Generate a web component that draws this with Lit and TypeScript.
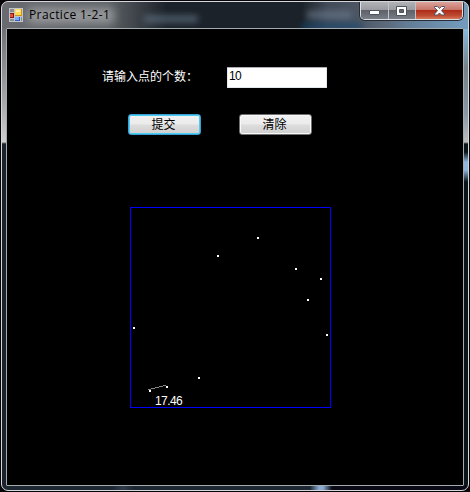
import { LitElement, html, svg, css } from "lit";
import { customElement } from "lit/decorators.js";

const POINTS: [number, number][] = [
  [257, 237], [217, 255], [295, 268], [320, 278], [307, 299],
  [133, 327], [326, 334], [198, 377], [149, 390], [166, 386],
];

@customElement("plot-canvas")
class PlotCanvas extends LitElement {
  static styles = css`
    :host { display: block; width: 201px; height: 201px; position: relative; }
    svg { display: block; }
    .distance {
      position: absolute; left: 25px; top: 187px; line-height: 14px;
      font-size: 12px; color: #fff; letter-spacing: -0.6px;
      font-family: "Liberation Sans", sans-serif;
    }
  `;
  render() {
    return html`
      <svg width="201" height="201" viewBox="130 207 201 201" shape-rendering="crispEdges">
        <path fill="#0000ff" fill-rule="evenodd" d="M130 207h201v201h-201zM131 208v199h199v-199z" />
        <path d="M148 389.5h3M151 388.5h4M155 387.5h4M159 386.5h4M163 385.5h3" stroke="#858585" fill="none" />
        ${POINTS.map(([x, y]) => svg`<rect x=${x} y=${y} width="2" height="2" fill="#fff" />`)}
      </svg>
      <span class="distance">17.46</span>
    `;
  }
}

@customElement("title-bar")
class TitleBar extends LitElement {
  static styles = css`
    :host { display: flex; height: 26px; position: relative; overflow: hidden; }
    .icon { margin: 6px 0 0 7px; flex: none; z-index: 1; }
    .title {
      margin: 5px 0 0 6px; font: 12px/16px "Open Sans", "Noto Sans", sans-serif;
      color: #000; white-space: nowrap; letter-spacing: 0.4px; flex: 1; z-index: 1;
    }
    .halo {
      position: absolute; left: 26px; top: 6px; width: 86px; height: 15px;
      background: #a2a4a6; filter: blur(5px); opacity: .85;
    }
    .blur {
      position: absolute; left: 142px; top: 13px; width: 54px; height: 8px;
      background: #64788a; filter: blur(3px); opacity: .6;
    }
    .blur.right { left: 305px; top: 9px; width: 44px; background: #76899d; opacity: .5; }
    .blur.glow { left: 300px; top: 21px; width: 60px; height: 7px; background: #174972; opacity: .7; }
    .controls {
      display: flex; width: 103px; height: 18px; flex: none; z-index: 1; margin-right: 5px;
      border: 1px solid #dce0e5; border-top: 0; border-radius: 0 0 5px 5px;
      box-shadow: 0 0 0 1px #272c35; overflow: hidden; box-sizing: border-box;
    }
    .control {
      display: flex; align-items: center; justify-content: center; width: 28px;
      background: linear-gradient(#b0b2b6, #9a9ca2 45%, #5e6168 50%, #777d86);
      border-right: 1px solid #c0c4ca; box-sizing: border-box;
    }
    .control svg { display: block; }
    .control.min svg { margin-top: 3px; }
    .control.max { width: 27px; }
    .control.close {
      flex: 1; border-right: 0;
      background: linear-gradient(#dba49b, #c9766a 45%, #ae2b18 50%, #bd4b32 80%, #d87859);
    }
  `;
  render() {
    return html`
      <div class="halo"></div>
      <div class="blur"></div><div class="blur right"></div><div class="blur glow"></div>
      <svg class="icon" width="14" height="14" viewBox="0 0 14 14" shape-rendering="crispEdges">
        <path fill="#c3c5ca" d="M0 0h14v14H0z" />
        <path fill="#888d94" d="M1 1h4v3H1zM1 11h4v2H1zM12 9h1v4h-1z" />
        <path fill="#8d1710" d="M1 5h4v5H1z" /><path fill="#df5146" d="M1 6h3v3H1z" />
        <path fill="#cb931b" d="M6 1h7v7H6z" /><path fill="#ffda54" d="M6 1h6v6H6z" />
        <path fill="#fff0a5" d="M7 2h4v2H7z" />
        <path fill="#295fc4" d="M6 9h5v4H6z" /><path fill="#77adf5" d="M6 9h4v3H6z" />
      </svg>
      <span class="title">Practice 1-2-1</span>
      <div class="controls">
        <div class="control min"><svg width="13" height="6" viewBox="0 0 13 6">
          <rect x="1.5" y="1.5" width="10" height="4" rx=".5" fill="#fff" stroke="#4d535f" /></svg></div>
        <div class="control max"><svg width="12" height="10" viewBox="0 0 12 10">
          <path fill="#fff" fill-rule="evenodd" stroke="#4d535f" d="M.5 .5h10v9h-10zM3.5 3.5v3h4v-3z" /></svg></div>
        <div class="control close"><svg width="13" height="12" viewBox="0 0 13 12">
          <path fill="#fff" stroke="#565466" stroke-linejoin="round" d="M1.5 1.5h3l2 2 2-2h3v1L8.5 5.7l3 3.3v1h-3l-2-2-2 2h-3V9l3-3.3-3-3.2z" /></svg></div>
      </div>
    `;
  }
}

@customElement("app-root")
class AppRoot extends LitElement {
  static styles = css`
    :host { display: block; width: 470px; height: 492px; background: #080509; overflow: hidden; padding: 1px; box-sizing: border-box; }
    .window {
      height: 490px; box-sizing: border-box; border: 1px solid #d4d8dc; border-radius: 7px;
      display: flex; flex-direction: column; overflow: hidden;
      background:
        linear-gradient(90deg, #0000, #6c9cc655 50px) 100% 18px / 110px 9px no-repeat,
        linear-gradient(90deg, #696b70 0, #5d6266 105px, #42484d 130px, #1c2229 165px, #1c2229 300px, #424b59 325px, #59616e 390px, #7699b8 462px) 0 0 / 100% 27px no-repeat,
        linear-gradient(#6e7178, #aaa9ac 75px, #d0cecf 113px, #666b6f 114px, #1b222b 115px, #1b222b) 0 27px / 5px 457px no-repeat,
        linear-gradient(#86b9df, #758087 40px, #8998a7 85px, #bbb 113px, #08131a 115px, #08131a 123px, #91b5dc 133px, #91b5dc 141px, #08131a 153px, #08131a) 100% 27px / 5px 457px no-repeat,
        linear-gradient(90deg, #1c2731, #1c2731 110px, #2f3b4a 121px, #1c2731 132px, #1c2731 308px, #8baad0 317px, #8baad0 321px, #0a0a14 330px, #0a0a14) 0 100% / 100% 5px no-repeat,
        #1c2229;
    }
    .client {
      width: 458px; height: 458px; margin-left: 4px; box-sizing: border-box; flex: none;
      border: 1px solid #a1aaad; border-radius: 1px; background: #000; padding: 38px 0 0 95px;
    }
    .row { display: flex; }
    .text { font: 12px/16px "Noto Sans CJK SC", sans-serif; }
    label { color: #fff; width: 125px; padding-top: 1px; white-space: nowrap; }
    .input {
      background: #fff; width: 100px; height: 21px; box-sizing: border-box; color: #000;
      border: 1px solid #e3e9ef; border-top-color: #abadb3; border-radius: 1px;
      padding: 1px; font: 12px/15px "Liberation Sans", sans-serif; letter-spacing: -.6px;
    }
    .buttons { margin: 26px 0 0 26px; gap: 38px; }
    button {
      width: 73px; height: 21px; box-sizing: border-box; padding: 0 2px 1px 0; color: #000;
      border: 1px solid #707070; border-radius: 3px; box-shadow: inset 0 0 0 1px #f9f9f9;
      background: linear-gradient(#f2f2f2, #ebebeb 48%, #dddddd 52%, #cfcfcf);
    }
    button.text { line-height: 16px; }
    button.default { border-color: #3c9fd1; box-shadow: inset 0 0 0 1px #48cdf4; }
    plot-canvas { margin: 72px 0 0 28px; }
  `;
  render() {
    return html`
      <div class="window">
        <title-bar></title-bar>
        <div class="client">
          <div class="row"><label class="text">请输入点的个数：</label><div class="input">10</div></div>
          <div class="row buttons">
            <button class="text default">提交</button><button class="text">清除</button>
          </div>
          <plot-canvas></plot-canvas>
        </div>
      </div>
    `;
  }
}
